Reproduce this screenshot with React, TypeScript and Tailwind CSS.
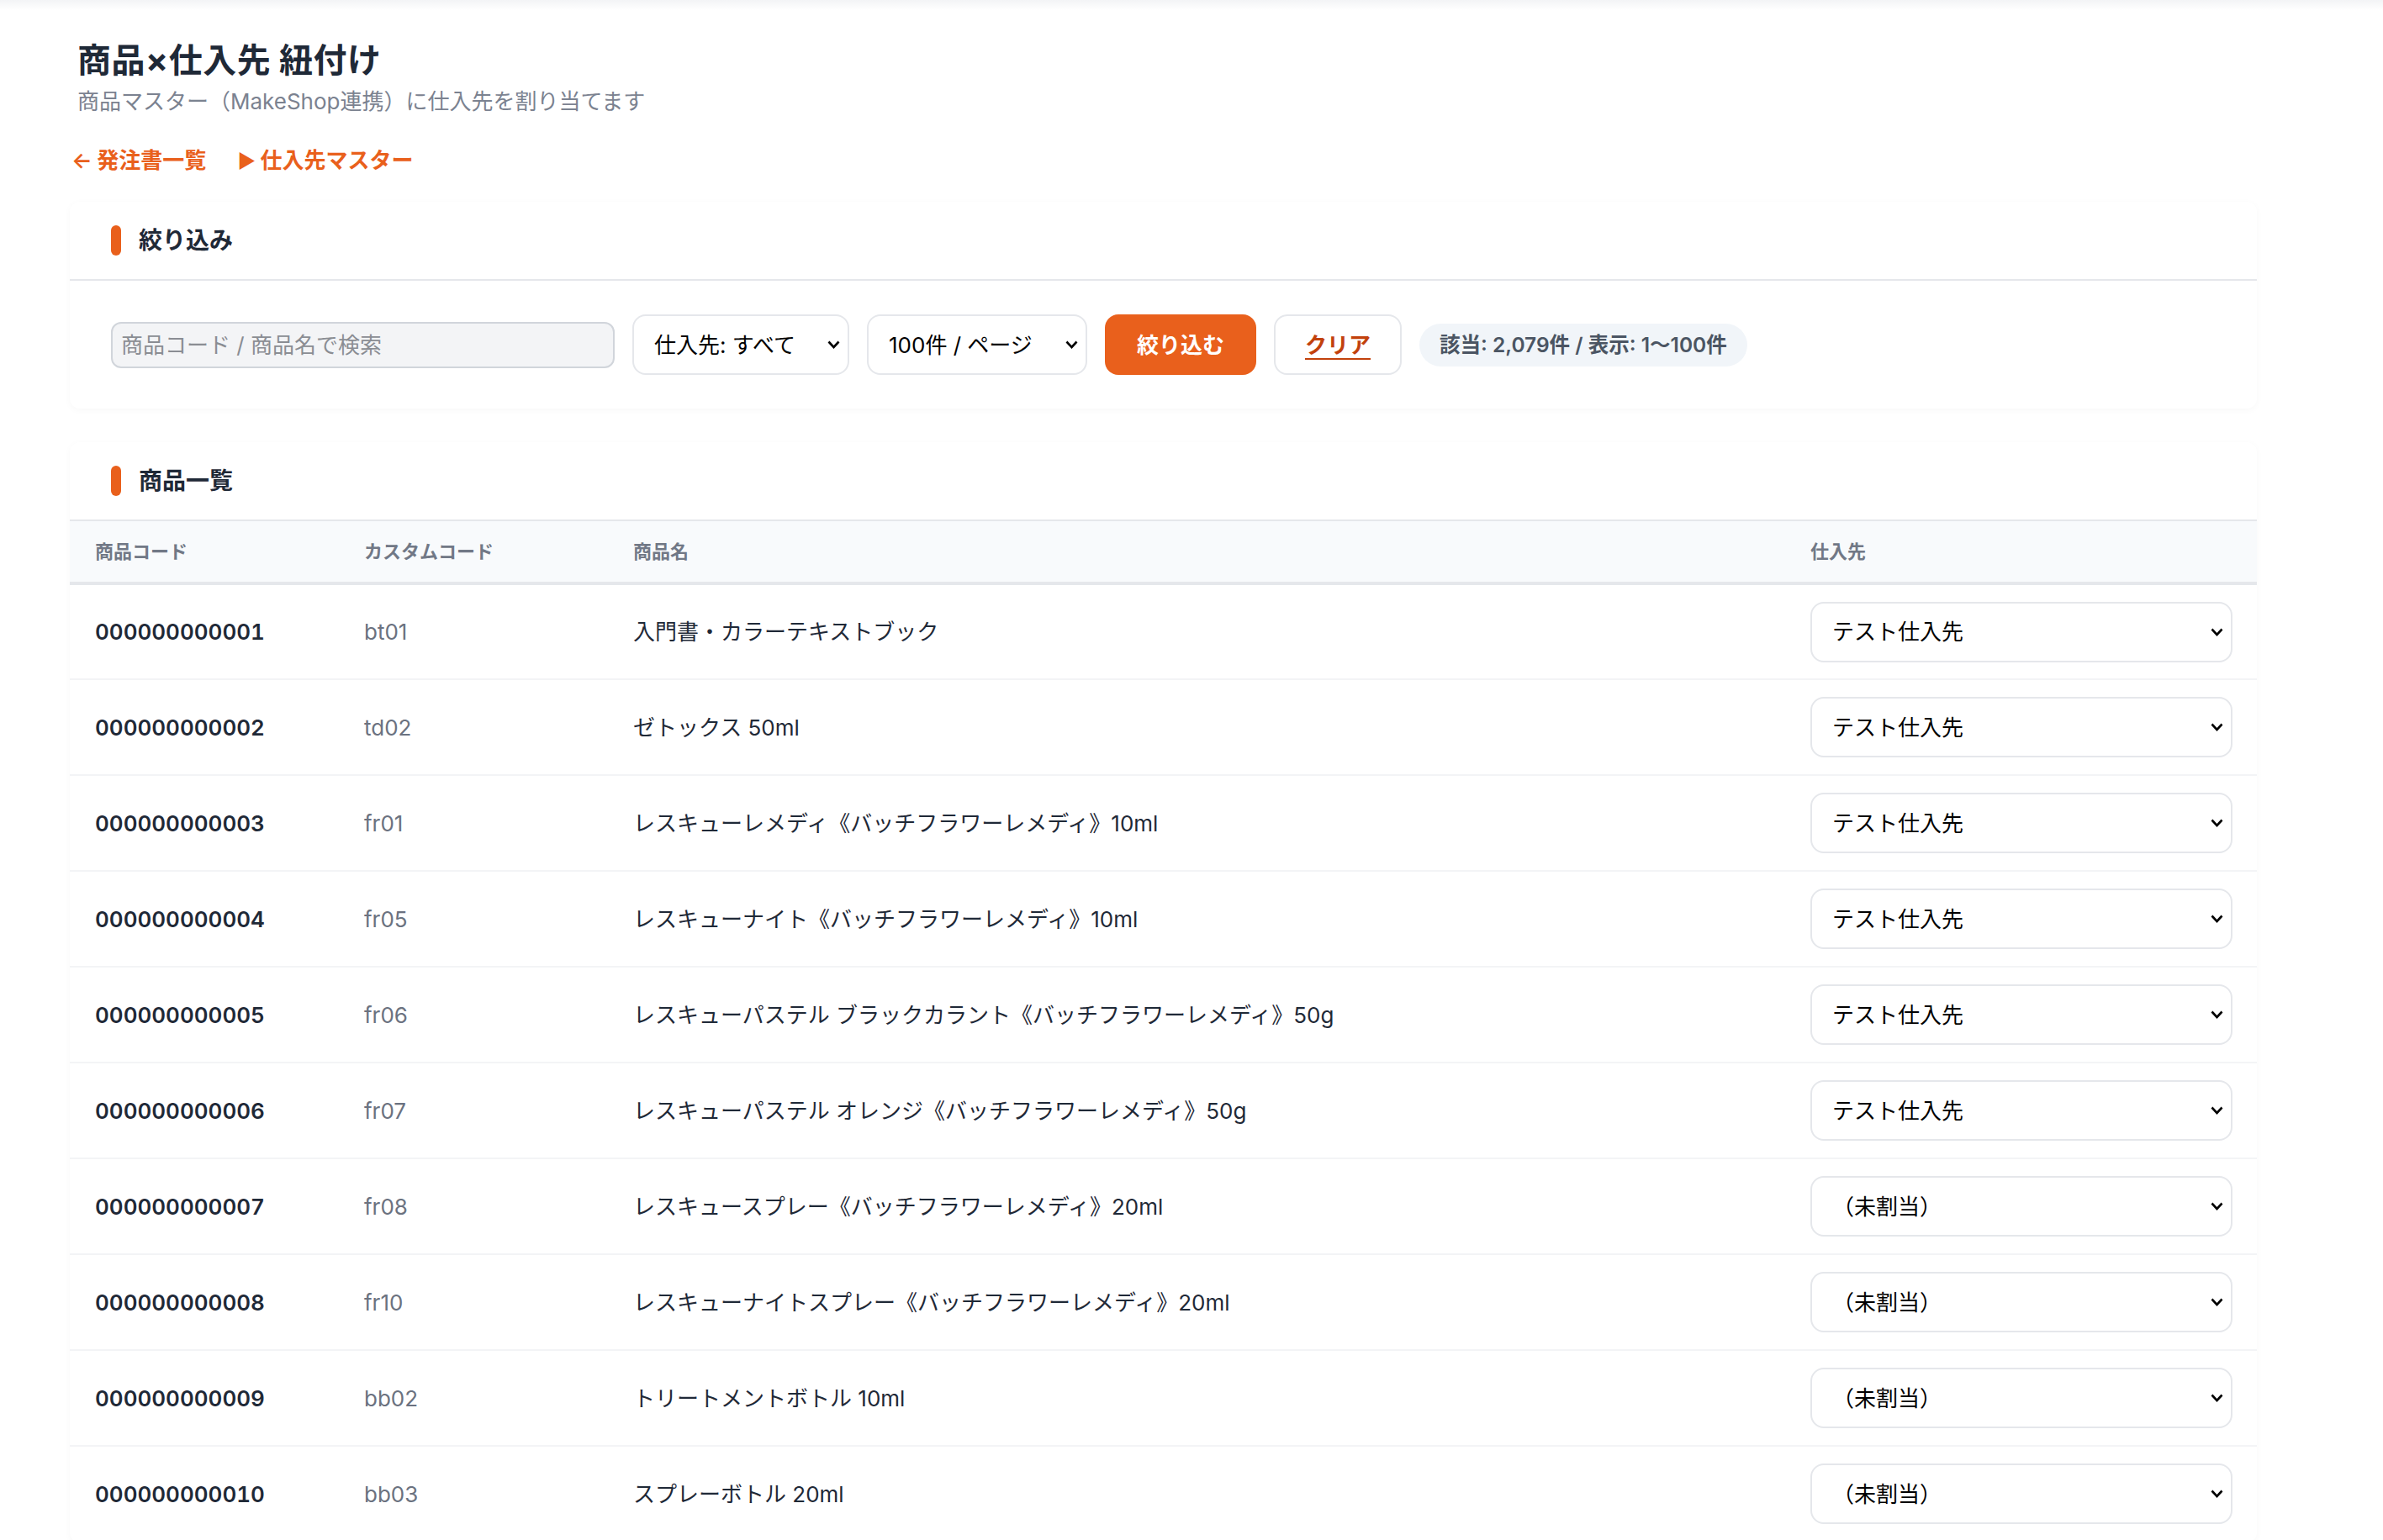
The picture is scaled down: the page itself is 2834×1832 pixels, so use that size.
const FONT = "font-['Inter','Noto_Sans_CJK_JP',sans-serif]";

const TEST = "テスト仕入先";
const NONE = "（未割当）";

const PRODUCTS = [
  { code: "000000000001", custom: "bt01", name: "入門書・カラーテキストブック", supplier: TEST },
  { code: "000000000002", custom: "td02", name: "ゼトックス 50ml", supplier: TEST },
  { code: "000000000003", custom: "fr01", name: "レスキューレメディ《バッチフラワーレメディ》10ml", supplier: TEST },
  { code: "000000000004", custom: "fr05", name: "レスキューナイト《バッチフラワーレメディ》10ml", supplier: TEST },
  { code: "000000000005", custom: "fr06", name: "レスキューパステル ブラックカラント《バッチフラワーレメディ》50g", supplier: TEST },
  { code: "000000000006", custom: "fr07", name: "レスキューパステル オレンジ《バッチフラワーレメディ》50g", supplier: TEST },
  { code: "000000000007", custom: "fr08", name: "レスキュースプレー《バッチフラワーレメディ》20ml", supplier: NONE },
  { code: "000000000008", custom: "fr10", name: "レスキューナイトスプレー《バッチフラワーレメディ》20ml", supplier: NONE },
  { code: "000000000009", custom: "bb02", name: "トリートメントボトル 10ml", supplier: NONE },
  { code: "000000000010", custom: "bb03", name: "スプレーボトル 20ml", supplier: NONE },
];

const Chevron = () => (
  <svg
    viewBox="0 0 15 10"
    className="pointer-events-none absolute right-[11px] top-1/2 h-[10px] w-[15px] -translate-y-1/2"
    fill="none"
    stroke="#000"
    strokeWidth="2.6"
  >
    <path d="M1.5 1.5L7.5 8L13.5 1.5" />
  </svg>
);

const Select = ({ value, options, className }: { value: string; options: string[]; className: string }) => (
  <div className={`relative ${className}`}>
    <select
      defaultValue={value}
      className={`h-[72px] w-full appearance-none rounded-[16px] border-2 border-[#e5e7eb] bg-white pl-[24px] pr-[40px] text-[26px] text-black ${FONT}`}
    >
      {options.map((o) => (
        <option key={o}>{o}</option>
      ))}
    </select>
    <Chevron />
  </div>
);

const CardHeader = ({ title }: { title: string }) => (
  <div className="flex h-[94px] items-center gap-[21px] border-b-2 border-[#e5e7eb] pl-[49px]">
    <span className="h-[36px] w-[12px] rounded-full bg-[#e9601c]" />
    <h2 className="text-[28px] font-bold leading-none text-[#1f2937]">{title}</h2>
  </div>
);

export default function App() {
  return (
    <div className={`h-[1832px] overflow-hidden bg-white ${FONT}`}>
      <div className="h-[12px] bg-gradient-to-b from-[#f3f4f6] to-white" />
      <div className="ml-[83px] w-[2601px]">
        <div className="pl-[9px] pt-[38px]">
          <h1 className="text-[40px] font-bold leading-[44px] tracking-[0.5px] text-[#1f2937]">商品×仕入先 紐付け</h1>
          <p className="mt-[11px] text-[26px] leading-[32px] text-[#7b8290]">
            商品マスター（MakeShop連携）に仕入先を割り当てます
          </p>
        </div>
        <div className="mt-[36px] flex gap-[37px] pl-[2px] text-[26px] font-semibold leading-[36px] text-[#e9601c]">
          <a>
            <span className="mr-[-1px]">←</span> 発注書一覧
          </a>
          <a>
            <span className="mr-[-1px] text-[23px]">▶</span> 仕入先マスター
          </a>
        </div>

        <section className="mt-[30px] rounded-[12px] bg-white shadow-[0_2px_8px_rgba(0,0,0,0.03)]">
          <CardHeader title="絞り込み" />
          <div className="flex items-center gap-[21px] py-[40px] pl-[49px]">
            <input
              placeholder="商品コード / 商品名で検索"
              className="h-[55px] w-[599px] rounded-[12px] border-2 border-[#d1d5db] bg-[#f3f4f6] px-[10px] text-[26px] placeholder:text-[#8a8d93]"
            />
            <Select value="仕入先: すべて" options={["仕入先: すべて"]} className="w-[258px]" />
            <Select value="100件 / ページ" options={["100件 / ページ"]} className="w-[262px]" />
            <button className="h-[72px] w-[180px] rounded-[16px] bg-[#e9601c] text-[26px] font-bold text-white">
              絞り込む
            </button>
            <button className="h-[72px] w-[152px] rounded-[16px] border-2 border-[#e5e7eb] bg-white text-[26px] font-bold text-[#c2410c] underline underline-offset-[6px]">
              クリア
            </button>
            <span className="rounded-full bg-[#f1f5f9] px-[24px] py-[9px] text-[24.5px] font-semibold leading-[33px] text-[#4b5563]">
              該当: 2,079件 / 表示: 1〜100件
            </span>
          </div>
        </section>

        <section className="mt-[40px] rounded-[12px] bg-white shadow-[0_2px_8px_rgba(0,0,0,0.03)]">
          <CardHeader title="商品一覧" />
          <table className="w-full table-fixed border-collapse">
            <colgroup>
              <col className="w-[320px]" />
              <col className="w-[320px]" />
              <col />
              <col className="w-[561px]" />
            </colgroup>
            <thead>
              <tr className="h-[74px] border-b-4 border-[#e5e7eb] bg-[#f8fafc] text-left text-[22px] text-[#717886]">
                <th className="pl-[30px] font-semibold">商品コード</th>
                <th className="pl-[30px] font-semibold">カスタムコード</th>
                <th className="pl-[30px] font-semibold">商品名</th>
                <th className="pl-[30px] font-semibold">仕入先</th>
              </tr>
            </thead>
            <tbody>
              {PRODUCTS.map((p) => (
                <tr key={p.code} className="h-[114px] border-b-2 border-[#f3f4f6] text-[26px]">
                  <td className="pl-[30px] font-semibold tabular-nums text-[#1f2937]">{p.code}</td>
                  <td className="pl-[30px] text-[#6b7280]">{p.custom}</td>
                  <td className="pl-[30px] text-[#1f2937]">{p.name}</td>
                  <td className="pl-[30px] pr-[29px]">
                    <Select value={p.supplier} options={[TEST, NONE]} className="w-full" />
                  </td>
                </tr>
              ))}
            </tbody>
          </table>
        </section>
      </div>
    </div>
  );
}
